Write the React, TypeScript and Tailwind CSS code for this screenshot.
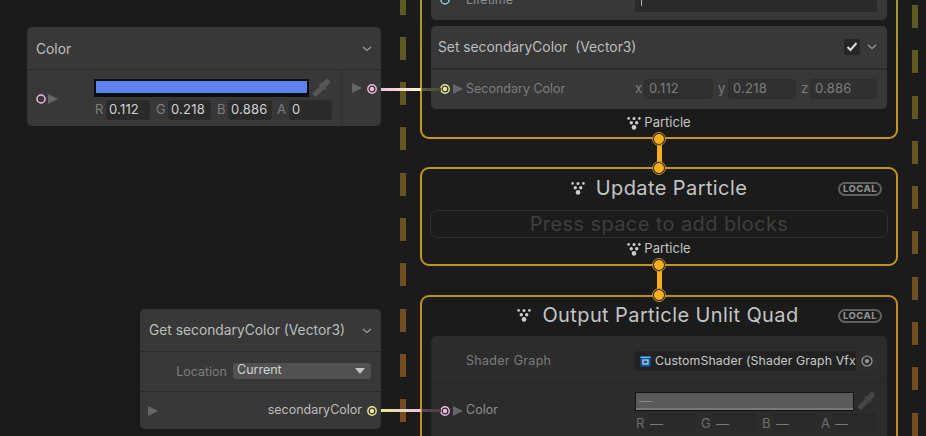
import React from 'react'

const mix = (a: number[], b: number[], t: number) =>
  `rgb(${a.map((v, i) => Math.round(v + (b[i] - v) * t)).join(',')})`

const olive = [92, 90, 32]
const brown = [122, 72, 32]

const DashColumn = ({ className, offset }: { className: string; offset: number }) => {
  const dashes = Array.from({ length: 11 }, (_, i) => i)
  return (
    <div className={`absolute flex flex-col gap-[22.3px] w-[6px] ${className}`} style={{ top: offset }}>
      {dashes.map((i) => (
        <div key={i} className="h-[23px] shrink-0" style={{ background: mix(olive, brown, i / 10) }} />
      ))}
    </div>
  )
}

const ParticleIcon = () => (
  <svg width="14" height="14" viewBox="0 0 14 14" className="shrink-0 text-[#cccccc]" fill="currentColor">
    <circle cx="1.6" cy="2.4" r="1.3" />
    <circle cx="7" cy="2.6" r="1.5" />
    <circle cx="12.4" cy="2.4" r="1.3" />
    <circle cx="4.3" cy="6.8" r="1.7" />
    <circle cx="9.7" cy="6.8" r="1.7" />
    <circle cx="7" cy="11.400" r="2.300" />
  </svg>
)

const Chevron = () => (
  <svg width="10" height="6" viewBox="0 0 10 6" className="shrink-0" fill="none" stroke="#9a9a9a" strokeWidth="1.3">
    <path d="M1 1l4 3.5L9 1" />
  </svg>
)

const Tri = () => (
  <div className="w-0 h-0 shrink-0 border-y-[5.5px] border-y-transparent border-l-[10px] border-l-[#666666]" />
)

const Port = ({ color }: { color: string }) => (
  <svg width="10" height="10" viewBox="0 0 10 10" className="shrink-0">
    <circle cx="5" cy="5" r="4.2" fill="none" stroke={color} strokeWidth="1.4" />
    <circle cx="5" cy="5" r="2.2" fill={color} />
  </svg>
)

const EmptyPort = ({ color }: { color: string }) => (
  <svg width="10" height="10" viewBox="0 0 10 10" className="shrink-0">
    <circle cx="5" cy="5" r="4" fill="none" stroke={color} strokeWidth="1.5" />
  </svg>
)

const Dropper = ({ className }: { className: string }) => (
  <svg width="18" height="18" viewBox="0 0 18 18" className={`shrink-0 ${className}`} fill="none" stroke="currentColor">
    <path d="M2 16.500L10 8.500" strokeWidth="5" />
    <path d="M8 4.500L13.500 10" strokeWidth="3" />
    <path d="M11.500 6.500L15 3" strokeWidth="5.500" strokeLinecap="round" />
  </svg>
)

const Field = ({ value, w, dim }: { value: string; w: string; dim?: boolean }) => (
  <div
    className={`${w} h-[20px] shrink-0 flex items-center rounded-[3px] border text-[13px] tracking-[0.2px] ${
      dim ? 'border-[#2e2e2e] bg-[#303030] pl-[4px] text-[#7d7d7d]' : 'border-[#2c2c2c] bg-[#2a2a2a] pl-[2px] text-[#d2d2d2]'
    }`}
  >
    {value}
  </div>
)

const LocalBadge = ({ className }: { className: string }) => (
  <div
    className={`absolute right-[14px] h-[14px] w-[44px] flex items-center justify-center rounded-full border-2 border-[#616161] text-[9.5px] font-extrabold tracking-[0.4px] text-[#8c8c8c] ${className}`}
  >
    LOCAL
  </div>
)

const Joint = ({ top }: { top: number }) => (
  <div
    className="absolute left-[653px] w-[12px] h-[12px] rounded-full bg-[#f7ae1d] border border-[#1b1b1b] outline outline-1 outline-[#c2931f] z-20"
    style={{ top }}
  />
)

const Pipe = ({ top, h }: { top: number; h: number }) => (
  <div className="absolute left-[657px] w-[5px] bg-[#f7ae1d] z-10" style={{ top, height: h }} />
)

const Edge = ({ top, left, width, from, to }: { top: number; left: number; width: number; from: string; to: string }) => (
  <div
    className="absolute h-[3px] z-10"
    style={{ top, left, width, background: `linear-gradient(to right, ${from}, ${to})` }}
  />
)

const ParticleLabel = () => (
  <div className="flex items-center justify-center gap-[3px] pt-[2px] text-[#c4c4c4] text-[13px]">
    <ParticleIcon />
    <span>Particle</span>
  </div>
)

const ColorNode = () => (
  <div className="absolute left-[27px] top-[27px] w-[354px] h-[99px] rounded-[5px] bg-[#383838] flex flex-col overflow-hidden">
    <div className="h-[43px] shrink-0 flex items-center justify-between pt-[2px] px-[9px] border-b border-[#2a2a2a] text-[13.8px] text-[#bdbdbd]">
      <span>Color</span>
      <Chevron />
    </div>
    <div className="flex-1 flex">
      <div className="w-[315px] shrink-0 flex pl-[9px] pr-[10px] border-r border-[#2e2e2e]">
        <div className="w-[58px] shrink-0 flex items-center gap-[2px] pt-[2px]">
          <EmptyPort color="#f0b8e0" />
          <Tri />
        </div>
        <div className="flex-1 pt-[9px] flex flex-col gap-[3px]">
          <div className="flex items-start gap-[3px]">
            <div className="w-[215px] h-[18px] bg-[#5f82ef] border-[2px] border-[#0d0d0d] border-b-[4px]" />
            <Dropper className="text-[#565656]" />
          </div>
          <div className="flex items-center text-[13px] text-[#7d7d7d]">
            <span className="w-[11px] ml-[1px]">R</span>
            <Field value="0.112" w="w-[44px]" />
            <span className="w-[12px] ml-[6px]">G</span>
            <Field value="0.218" w="w-[43px]" />
            <span className="w-[11px] ml-[6px]">B</span>
            <Field value="0.886" w="w-[44px]" />
            <span className="w-[12px] ml-[5px]">A</span>
            <Field value="0" w="w-[43px]" />
          </div>
        </div>
      </div>
      <div className="flex-1 flex items-start justify-end gap-[5px] pr-[4px] pt-[13px]">
        <Tri />
        <div className="pt-[1px]">
          <Port color="#f0b8e0" />
        </div>
      </div>
    </div>
  </div>
)

const GetNode = () => (
  <div className="absolute left-[140px] top-[309px] w-[241px] h-[120px] rounded-[5px] bg-[#383838] flex flex-col overflow-hidden text-[12.5px]">
    <div className="h-[43px] shrink-0 flex items-center justify-between pt-[1px] px-[9px] border-b border-[#2a2a2a] text-[13.8px] text-[#bdbdbd]">
      <span className="whitespace-nowrap">Get secondaryColor (Vector3)</span>
      <Chevron />
    </div>
    <div className="h-[40px] shrink-0 flex items-center justify-end gap-[6px] pb-[2px] pr-[10px] border-b border-[#2a2a2a] text-[#7d7d7d]">
      <span className="pt-[3px]">Location</span>
      <div className="w-[138px] h-[16px] rounded-[3px] bg-[#515151] flex items-center justify-between pl-[4px] pr-[6px] text-[#d2d2d2]">
        <span>Current</span>
        <div className="w-0 h-0 border-x-[5px] border-x-transparent border-t-[6px] border-t-[#c4c4c4]" />
      </div>
    </div>
    <div className="flex-1 flex items-center justify-between pl-[8px] pr-[4px]">
      <Tri />
      <div className="flex items-center gap-[5px] text-[#bdbdbd]">
        <span>secondaryColor</span>
        <Port color="#e6ea8e" />
      </div>
    </div>
  </div>
)

const SpawnContext = () => (
  <div className="absolute left-[420px] top-[-60px] w-[478px] h-[199px] rounded-[9px] p-[2px] bg-gradient-to-b from-[#8e9a33] to-[#c8951d] z-0">
    <div className="w-full h-full rounded-[7px] bg-[#1b1b1b] flex flex-col justify-end items-stretch px-[9px] pb-[3px]">
      <div className="h-[40px] shrink-0 mb-[6px] rounded-b-[5px] bg-[#383838] flex items-center text-[12.5px] text-[#8c8c8c] pl-[9px] pr-[10px]">
        <EmptyPort color="#7fd8d8" />
        <span className="ml-[16px]">Lifetime</span>
        <div className="ml-auto w-[242px] h-[24px] rounded-[3px] bg-[#2a2a2a] flex items-end pb-[6px] pl-[6px]">
          <div className="w-[1px] h-[10px] bg-[#b4b4b4]" />
        </div>
      </div>
      <div className="h-[83px] shrink-0 rounded-[5px] bg-[#383838] flex flex-col">
        <div className="h-[44px] shrink-0 flex items-center pl-[7px] pr-[10px] border-b-2 border-[#2c2c2c] text-[13.8px] text-[#bdbdbd]">
          <span className="whitespace-pre">Set secondaryColor  (Vector3)</span>
          <div className="ml-auto mr-[7px] w-[16px] h-[16px] rounded-[2px] bg-[#262626] flex items-center justify-center">
            <svg width="12" height="10" viewBox="0 0 12 10" fill="none" stroke="#dcdcdc" strokeWidth="2">
              <path d="M1.500 5l3 3 6-7" />
            </svg>
          </div>
          <Chevron />
        </div>
        <div className="flex-1 flex items-center pl-[9px] pr-[10px] pb-[1px] text-[12.5px] text-[#7d7d7d]">
          <Port color="#e6ea8e" />
          <div className="ml-[3px]">
            <Tri />
          </div>
          <span className="ml-[3px]">Secondary Color</span>
          <span className="ml-auto w-[9px] text-[13px]">x</span>
          <Field value="0.112" w="w-[69px]" dim />
          <span className="ml-[5px] w-[10px] text-[13px]">y</span>
          <Field value="0.218" w="w-[68px]" dim />
          <span className="ml-[5px] w-[9px] text-[13px]">z</span>
          <Field value="0.886" w="w-[67px]" dim />
        </div>
      </div>
      <div className="h-[25px] shrink-0 flex items-center justify-center">
        <ParticleLabel />
      </div>
    </div>
  </div>
)

const UpdateContext = () => (
  <div className="absolute left-[420px] top-[167px] w-[478px] h-[99px] rounded-[9px] border-2 border-[#c2931f]">
    <LocalBadge className="top-[13px]" />
    <div className="h-[37px] mb-[4px] flex items-center justify-center gap-[11px] text-[20px] text-[#c4c4c4] tracking-[0.4px]">
      <ParticleIcon />
      <span>Update Particle</span>
    </div>
    <div className="mx-[8px] h-[28px] rounded-[8px] border border-[#2f2f2f] flex items-center justify-center text-[20px] text-[#3e3e3e] tracking-[0.4px]">
      Press space to add blocks
    </div>
    <div className="h-[20px] flex items-center justify-center">
      <ParticleLabel />
    </div>
  </div>
)

const DimField = ({ w }: { w: string }) => (
  <div className={`${w} h-[20px] shrink-0 rounded-[3px] border-t border-[#232323] bg-[#2a2a2a] pl-[3px] flex items-center text-[#7a7a7a]`}>
    —
  </div>
)

const OutputContext = () => (
  <div className="absolute left-[420px] top-[295px] w-[478px] h-[170px] rounded-[9px] border-2 border-[#c28a20]">
    <LocalBadge className="top-[12px]" />
    <div className="h-[36px] mb-[3px] pr-[2px] flex items-center justify-center gap-[11px] text-[20px] text-[#c4c4c4] tracking-[0.4px]">
      <ParticleIcon />
      <span>Output Particle Unlit Quad</span>
    </div>
    <div className="mx-[9px] h-[200px] rounded-[5px] bg-[#2c2c2c] flex flex-col text-[12.5px]">
      <div className="h-[47px] shrink-0 flex items-center pt-[4px] pl-[35px] pr-[10px] border-b border-[#272727] text-[#7d7d7d] tracking-[0.3px]">
        <span>Shader Graph</span>
        <div className="ml-auto w-[242px] h-[20px] rounded-[3px] bg-[#222222] flex items-center pl-[5px] text-[12.3px] tracking-[0.1px] text-[#c8c8c8] overflow-hidden">
          <svg width="11" height="11" viewBox="0 0 11 11" className="shrink-0">
            <rect x="0.500" y="0.500" width="10" height="10" fill="#0f5aa0" />
            <rect x="0.500" y="0.500" width="10" height="1.500" fill="#59b7ee" />
            <rect x="3" y="4" width="5" height="4" fill="none" stroke="#d8ecf8" />
          </svg>
          <span className="ml-[4px] flex-1 min-w-0 whitespace-nowrap">CustomShader (Shader Graph Vfx</span>
          <div className="w-[21px] h-full bg-[#2e2e2e] flex items-center justify-center shrink-0">
            <svg width="12" height="12" viewBox="0 0 12 12">
              <circle cx="6" cy="6" r="5" fill="none" stroke="#9a9a9a" strokeWidth="1.200" />
              <circle cx="6" cy="6" r="2" fill="#9a9a9a" />
            </svg>
          </div>
        </div>
      </div>
      <div className="flex-1 flex pl-[9px] pr-[10px]">
        <div className="w-[195px] h-[55px] shrink-0 flex items-center text-[#8c8c8c]">
          <Port color="#f0b8e0" />
          <div className="ml-[3px]">
            <Tri />
          </div>
          <span className="ml-[3px]">Color</span>
        </div>
        <div className="flex-1 pt-[9px] flex flex-col gap-[3px]">
          <div className="flex items-start gap-[3px]">
            <div className="w-[219px] h-[19px] border border-[#151515] flex flex-col bg-[#5a5a5a]">
              <div className="flex-1 flex items-end pl-[3px] text-[13px] leading-[14px] text-[#8c8c8c]">—</div>
              <div className="h-[2px] bg-[#787878]" />
            </div>
            <Dropper className="text-[#464646]" />
          </div>
          <div className="flex items-center text-[13px] text-[#6c6c6c]">
            <span className="w-[11px] ml-[1px]">R</span>
            <DimField w="w-[48px]" />
            <span className="w-[12px] ml-[6px]">G</span>
            <DimField w="w-[43px]" />
            <span className="w-[11px] ml-[6px]">B</span>
            <DimField w="w-[43px]" />
            <span className="w-[11px] ml-[5px]">A</span>
            <DimField w="w-[44px]" />
          </div>
        </div>
      </div>
    </div>
  </div>
)

const App = () => {
  return (
    <div className="relative w-[926px] h-[436px] overflow-hidden bg-[#1b1b1b] font-['Inter',sans-serif]">
      <DashColumn className="left-[400px]" offset={-8.500} />
      <DashColumn className="left-[912px]" offset={5} />

      <Edge top={88} left={381} width={40} from="#eec1e3" to="#fff6c8" />
      <Edge top={409} left={381} width={40} from="#e6ea8e" to="#eec1e3" />

      <SpawnContext />
      <UpdateContext />
      <OutputContext />

      <Edge top={88} left={422} width={19} from="#5a5a3c" to="#4a4a30" />
      <Edge top={409} left={422} width={19} from="#554a50" to="#4a4048" />

      <ColorNode />
      <GetNode />

      <Pipe top={139} h={29} />
      <Pipe top={265} h={30} />
      <Joint top={133} />
      <Joint top={162} />
      <Joint top={259} />
      <Joint top={289} />
    </div>
  )
}

export default App
